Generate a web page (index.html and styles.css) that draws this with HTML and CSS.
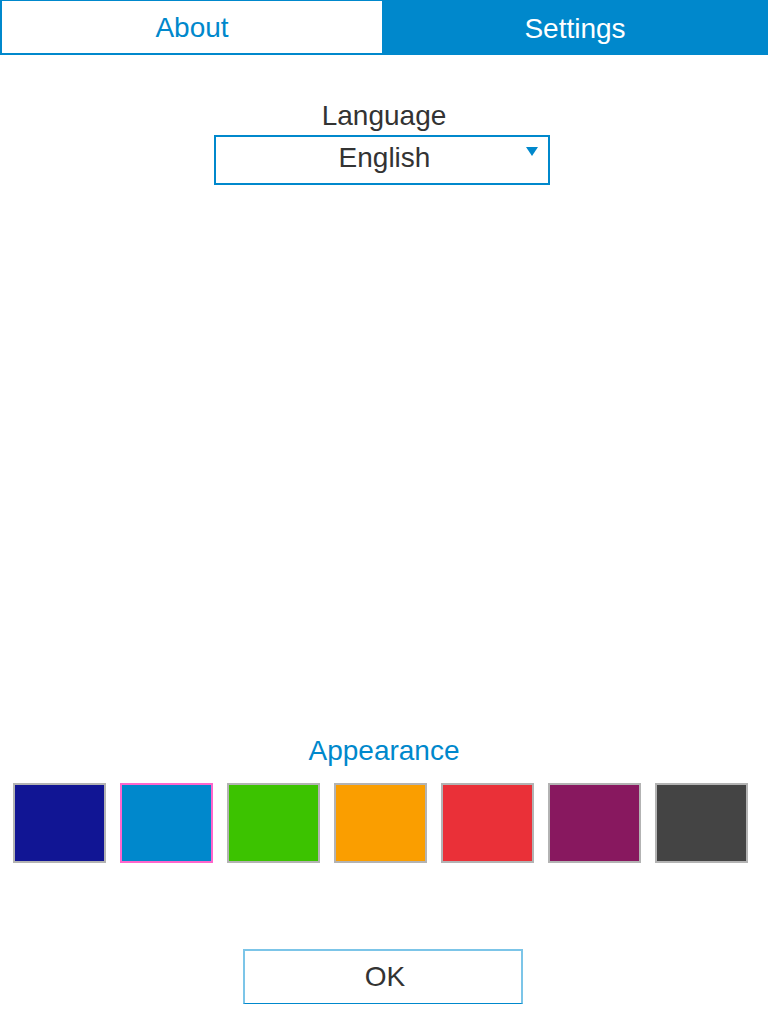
FILE: index.html
```html
<!DOCTYPE html>
<html>
<head>
<meta charset="utf-8">
<link rel="stylesheet" href="styles.css">
</head>
<body>
<div class="page">
  <div class="tabs">
    <div class="tab tab-active">About</div>
    <div class="tab tab-inactive">Settings</div>
  </div>
  <div class="language">
    <div class="label">Language</div>
    <div class="select">
      <span class="select-value">English</span>
      <span class="arrow"></span>
    </div>
  </div>
  <div class="appearance">
    <div class="label label-blue">Appearance</div>
    <div class="swatches">
      <div class="swatch sw-navy"></div>
      <div class="swatch sw-blue selected"></div>
      <div class="swatch sw-green"></div>
      <div class="swatch sw-orange"></div>
      <div class="swatch sw-red"></div>
      <div class="swatch sw-purple"></div>
      <div class="swatch sw-dark"></div>
    </div>
  </div>
  <div class="actions">
    <div class="ok">OK</div>
  </div>
</div>
</body>
</html>
```
FILE: styles.css
```css
html, body {
  margin: 0;
  padding: 0;
  background: #ffffff;
}
body {
  font-family: "Liberation Sans", Arial, sans-serif;
  font-size: 28px;
  color: #333333;
}
.page {
  height: 1024px;
  display: flex;
  flex-direction: column;
}
.tabs {
  display: flex;
  height: 55px;
  background: #0088cc;
}
.tab {
  text-align: center;
  box-sizing: border-box;
}
.tab-active {
  width: 382px;
  background: #ffffff;
  color: #0088cc;
  border-style: solid;
  border-color: #0088cc;
  border-width: 1px 0 2px 2px;
  line-height: 54px;
}
.tab-inactive {
  flex: 1;
  color: #ffffff;
  line-height: 57px;
}
.language {
  margin-top: 45px;
  display: flex;
  flex-direction: column;
  align-items: center;
}
.label {
  line-height: 32px;
  text-align: center;
}
.label-blue {
  color: #0088cc;
}
.select {
  position: relative;
  margin-top: 3px;
  margin-right: 4px;
  padding-left: 5px;
  width: 336px;
  height: 50px;
  box-sizing: border-box;
  border: 2px solid #0088cc;
  text-align: center;
  line-height: 42px;
}
.arrow {
  position: absolute;
  right: 10px;
  top: 10px;
  width: 0;
  height: 0;
  border-left: 6.5px solid transparent;
  border-right: 6.5px solid transparent;
  border-top: 9px solid #0088cc;
}
.appearance {
  margin-top: auto;
}
.swatches {
  display: flex;
  gap: 14px;
  padding-left: 13px;
  margin-top: 16px;
}
.swatch {
  width: 93px;
  height: 80px;
  box-sizing: border-box;
  border: 2px solid #b3b3b3;
}
.swatch.selected {
  border-color: #ff66cc;
}
.sw-navy { background: #111594; }
.sw-blue { background: #0088cc; }
.sw-green { background: #3cc300; }
.sw-orange { background: #fa9e00; }
.sw-red { background: #ea3038; }
.sw-purple { background: #88185f; }
.sw-dark { background: #444444; }
.actions {
  display: flex;
  justify-content: center;
  margin-top: 86px;
  margin-bottom: 20px;
}
.ok {
  width: 280px;
  height: 55px;
  box-sizing: border-box;
  margin-right: 2px;
  padding-left: 4px;
  border-style: solid;
  border-width: 2px 2px 1px 2px;
  border-color: #7cc5e8;
  border-bottom-color: #0088cc;
  text-align: center;
  line-height: 52px;
}
```
